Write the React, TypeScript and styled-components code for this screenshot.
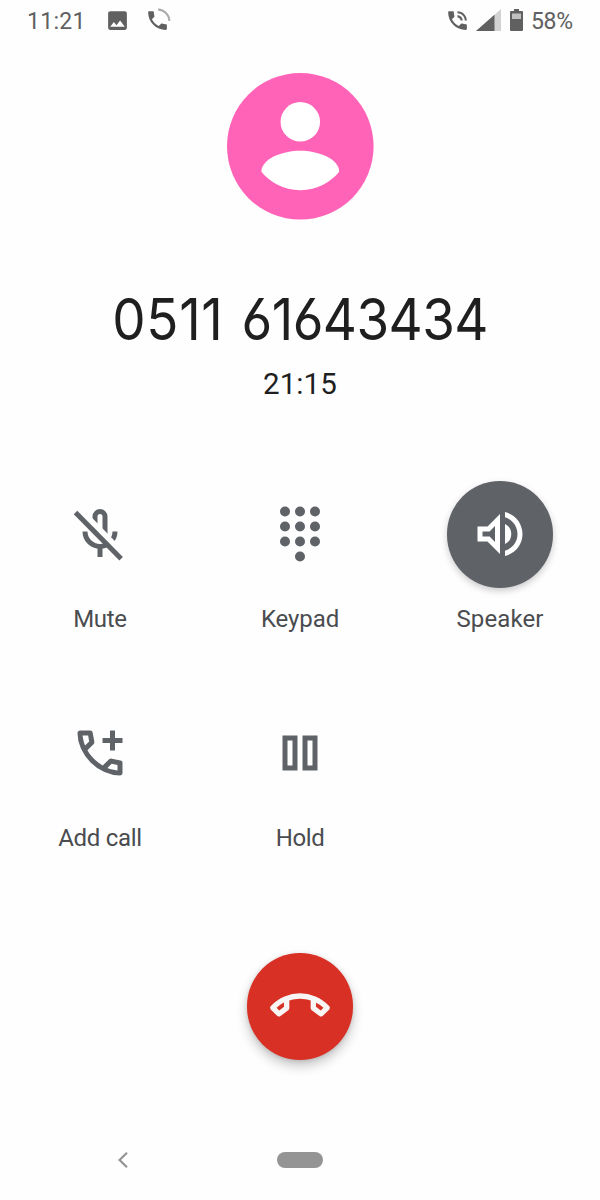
import React from "react";
import styled, { createGlobalStyle } from "styled-components";

const GlobalStyle = createGlobalStyle`
  * { box-sizing: border-box; }
  body { margin: 0; background: #fefefe; }
  svg { display: block; flex: none; overflow: visible; }
`;

const Screen = styled.main`
  width: 600px;
  height: 1200px;
  display: flex;
  flex-direction: column;
  align-items: center;
  background: #fefefe;
  font-family: Roboto, sans-serif;
  color: #1f1f1f;
  overflow: hidden;
`;

const StatusBar = styled.header`
  width: 100%;
  height: 40px;
  padding: 0 27px;
  display: flex;
  justify-content: space-between;
  align-items: center;
  color: #606060;
  font-size: 23px;
  line-height: 36px;
`;

const StatusGroup = styled.div`
  display: flex;
  align-items: center;
`;

const StatusIcon = styled.svg<{ $gap: number }>`
  margin-left: ${(p) => p.$gap}px;
`;

const StatusText = styled.span<{ $gap?: number; $spacing?: number }>`
  margin-left: ${(p) => p.$gap ?? 0}px;
  padding-top: 4px;
  letter-spacing: ${(p) => p.$spacing ?? 0}px;
`;

const Avatar = styled.svg`
  margin-top: 33px;
`;

const PhoneNumber = styled.h1`
  margin: 63.4px 0 0;
  height: 72px;
  line-height: 72px;
  font-family: Inter, sans-serif;
  font-weight: 400;
  font-size: 57.5px;
  letter-spacing: -0.6px;
  word-spacing: 4px;
  font-feature-settings: "cv03", "calt" 0;
  white-space: nowrap;
  transform: scaleX(0.92);
`;

const AreaCode = styled.span`
  letter-spacing: 0.7px;
`;

const Duration = styled.div`
  margin-top: 11px;
  height: 36px;
  line-height: 36px;
  font-size: 29.5px;
  letter-spacing: 0.1px;
`;

const Actions = styled.section`
  width: 600px;
  margin-top: 79px;
  display: grid;
  grid-template-columns: repeat(3, 200px);
  grid-auto-rows: 219px;
`;

const Action = styled.button`
  border: 0;
  padding: 0;
  background: none;
  display: flex;
  flex-direction: column;
  align-items: center;
  font: inherit;
  color: #5f6368;
`;

const ActionDisc = styled.span<{ $active?: boolean }>`
  width: 106.6px;
  height: 106.6px;
  border-radius: 50%;
  display: flex;
  align-items: center;
  justify-content: center;
  color: ${(p) => (p.$active ? "#fff" : "#5f6368")};
  background: ${(p) => (p.$active ? "#5f6368" : "transparent")};
  box-shadow: ${(p) => (p.$active ? "0 3px 7px rgba(0,0,0,.2)" : "none")};
`;

const ActionLabel = styled.span<{ $spacing: number }>`
  margin-top: 15.4px;
  height: 32px;
  line-height: 32px;
  font-size: 24px;
  letter-spacing: ${(p) => p.$spacing}px;
  color: #4a4c4f;
`;

const HangUp = styled.button`
  margin-top: 34px;
  width: 106.6px;
  height: 106.6px;
  flex: none;
  border: 0;
  padding: 0 0 2px;
  border-radius: 50%;
  background: #d93025;
  color: #f8f5f5;
  display: flex;
  align-items: center;
  justify-content: center;
  box-shadow: 0 6px 12px rgba(0, 0, 0, 0.22), 0 1px 4px rgba(0, 0, 0, 0.12);
`;

const NavBar = styled.nav`
  width: 100%;
  margin-top: auto;
  height: 80px;
  display: grid;
  grid-template-columns: 246px 108px 246px;
  align-items: center;
  justify-items: center;
`;

const HomePill = styled.span`
  width: 46.6px;
  height: 16.6px;
  border-radius: 9px;
  background: #949494;
`;

const PHONE =
  "M20 15.5c-1.25 0-2.45-.2-3.57-.57-.35-.11-.74-.03-1.02.24l-2.2 2.2c-2.83-1.44-5.15-3.75-6.59-6.59l2.2-2.21c.28-.26.36-.65.25-1C8.7 6.45 8.5 5.25 8.5 4c0-.55-.45-1-1-1H4c-.55 0-1 .45-1 1 0 9.39 7.61 17 17 17 .55 0 1-.45 1-1v-3.5c0-.55-.45-1-1-1z";

const MuteIcon = () => (
  <svg width="60" height="60" viewBox="0 0 24 24" fill="none" stroke="currentColor" strokeWidth="2">
    <path d="M10 12V5a2 2 0 0 1 4 0v7M6 11a6 6 0 0 0 12 0M12 17v4.2" />
    <path d="M3.65 2 21.9 20.5" stroke="#fefefe" strokeWidth="2.4" />
    <path d="M8 10.2 13 15.2" stroke="#fefefe" strokeWidth="2.6" />
    <path d="M2.2 3.4 20.45 21.9" />
  </svg>
);

const KeypadIcon = () => (
  <svg width="60" height="60" viewBox="0 0 24 24" fill="currentColor">
    {[3, 9, 15].flatMap((y) => [6, 12, 18].map((x) => <circle key={`${x}-${y}`} cx={x} cy={y} r="2" />))}
    <circle cx="12" cy="21" r="2" />
  </svg>
);

const SpeakerIcon = () => (
  <svg width="60" height="60" viewBox="0 0 24 24" fill="currentColor">
    <path d="M3 9v6h4l5 5V4L7 9H3zm7-.17v6.34L7.83 13H5v-2h2.83L10 8.83zM16.5 12A4.5 4.5 0 0 0 14 7.97v8.05A4.47 4.47 0 0 0 16.5 12zM14 3.23v2.06c2.89.86 5 3.54 5 6.71s-2.11 5.85-5 6.71v2.06c4.01-.91 7-4.49 7-8.77s-2.99-7.86-7-8.77z" />
  </svg>
);

const AddCallIcon = () => (
  <svg width="60" height="60" viewBox="0 -960 960 960" fill="currentColor">
    <path d="M798-120q-125 0-247-54.5T329-329Q229-429 174.5-551T120-798q0-18 12-30t30-12h162q14 0 25 9.5t13 22.5l26 140q2 16-1 27t-11 19l-97 98q20 37 47.5 71.5T387-386q31 31 65 57.5t72 48.5l94-94q9-9 23.5-13.5T670-390l138 28q14 4 23 14.5t9 23.5v162q0 18-12 30t-30 12ZM241-600l66-66-17-94h-89q5 41 14 81t26 79Zm358 358q39 17 79.5 27t81.5 13v-88l-94-19-67 67Z" />
    <path d="M640-840h80v120h120v80H720v120h-80v-120H520v-80h120z" />
  </svg>
);

const HoldIcon = () => (
  <svg width="60" height="60" viewBox="0 0 24 24" fill="none" stroke="currentColor" strokeWidth="2">
    <path d="M6 6h4v12H6zM14 6h4v12h-4z" />
  </svg>
);

const HangUpIcon = () => (
  <svg width="64" height="64" viewBox="0 -945 960 960" fill="currentColor">
    <path d="m136-304-92-90q-12-12-12-28t12-28q88-95 203-142.5T480-640q118 0 232.5 47.5T916-450q12 12 12 28t-12 28l-92 90q-11 11-25.5 12t-26.5-8l-116-88q-8-6-12-14t-4-18v-114q-38-12-78-19t-82-7q-42 0-82 7t-78 19v114q0 10-4 18t-12 14l-116 88q-12 9-26.5 8T136-304Zm104-198q-29 15-56 34.5T128-424l40 40 72-56v-62Zm480 2v60l72 56 40-38q-29-26-56-45t-56-33Z" />
  </svg>
);

const actions = [
  { label: "Mute", icon: <MuteIcon />, spacing: -0.3 },
  { label: "Keypad", icon: <KeypadIcon />, spacing: -0.1 },
  { label: "Speaker", icon: <SpeakerIcon />, spacing: 0.1, active: true },
  { label: "Add call", icon: <AddCallIcon />, spacing: -0.3 },
  { label: "Hold", icon: <HoldIcon />, spacing: -0.4 },
];

export default function App() {
  return (
    <Screen>
      <GlobalStyle />
      <StatusBar>
        <StatusGroup>
          <StatusText $spacing={0.3}>11:21</StatusText>
          <StatusIcon $gap={19} width="25" height="25" viewBox="0 0 24 24" fill="#606060">
            <path d="M21 19V5c0-1.1-.9-2-2-2H5c-1.1 0-2 .9-2 2v14c0 1.1.9 2 2 2h14c1.1 0 2-.9 2-2zM8.5 13.5l2.500 3.010L14.500 12l4.500 6H5l3.500-4.500z" />
          </StatusIcon>
          <StatusIcon $gap={15} width="25" height="25" viewBox="0 0 24 24" fill="#606060">
            <path d={PHONE} />
            <path d="M12.500 1.500A11.500 11.500 0 0 1 23.500 12.500" fill="none" stroke="#ababab" strokeWidth="1.900" />
          </StatusIcon>
        </StatusGroup>
        <StatusGroup>
          <StatusIcon $gap={0} width="25" height="25" viewBox="0 0 24 24" fill="#606060">
            <path d={PHONE} />
            <path d="M19 12h2c0-4.970-4.030-9-9-9v2c3.870 0 7 3.130 7 7zm-4 0h2c0-2.760-2.240-5-5-5v2c1.660 0 3 1.340 3 3z" />
          </StatusIcon>
          <StatusIcon $gap={6} width="25" height="22" viewBox="0 0 25 22">
            <path d="M0 22 25 0v22z" fill="#d2d2d2" />
            <path d="M0 22 18.500 5.700V22z" fill="#606060" />
          </StatusIcon>
          <StatusIcon $gap={9} width="13" height="22" viewBox="0 0 13 22">
            <path d="M4 0h5v2h3a1 1 0 0 1 1 1v18a1 1 0 0 1-1 1H1a1 1 0 0 1-1-1V3a1 1 0 0 1 1-1h3z" fill="#606060" />
            <path d="M2 4.500h9V10H2z" fill="#c0c0c0" />
          </StatusIcon>
          <StatusText $gap={8} $spacing={-0.2}>58%</StatusText>
        </StatusGroup>
      </StatusBar>

      <Avatar width="146.6" height="146.6" viewBox="0 0 147 147">
        <circle cx="73.500" cy="73.500" r="73.500" fill="#ff63b8" />
        <circle cx="73.500" cy="49" r="19.800" fill="#fff" />
        <path d="M34.500 99C34.500 86 56 78 73.500 78s39 8 39 21c-8 10-22 18.500-39 18.500S42.500 109 34.500 99z" fill="#fff" />
      </Avatar>
      <PhoneNumber>
        <AreaCode>0511</AreaCode> 61643434
      </PhoneNumber>
      <Duration>21:15</Duration>

      <Actions>
        {actions.map((a) => (
          <Action key={a.label}>
            <ActionDisc $active={a.active}>{a.icon}</ActionDisc>
            <ActionLabel $spacing={a.spacing}>{a.label}</ActionLabel>
          </Action>
        ))}
      </Actions>

      <HangUp aria-label="End call">
        <HangUpIcon />
      </HangUp>

      <NavBar>
        <svg width="10" height="16" viewBox="0 0 10 16" fill="none" stroke="#949494" strokeWidth="2.200">
          <path d="M9 .8 1.600 8 9 15.200" />
        </svg>
        <HomePill />
      </NavBar>
    </Screen>
  );
}
